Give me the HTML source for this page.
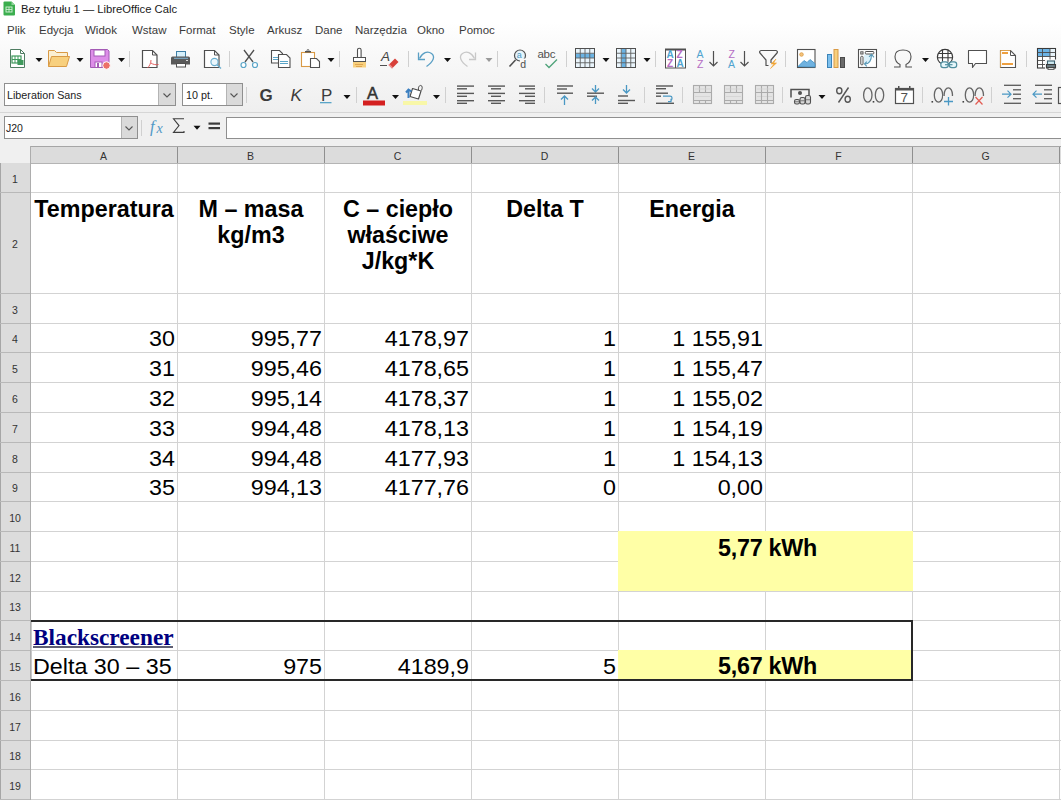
<!DOCTYPE html>
<html><head><meta charset="utf-8"><style>
html,body{margin:0;padding:0;}
body{width:1061px;height:800px;overflow:hidden;position:relative;background:#fff;font-family:"Liberation Sans",sans-serif;}
</style></head><body>
<div style="position:absolute;left:0px;top:0px;width:1061px;height:22px;background:#ffffff;"></div>
<div style="position:absolute;left:0;top:22px;width:1061px;height:90px;background:linear-gradient(#ffffff,#f8f8f8 40%,#efefef)"></div>
<div style="position:absolute;left:0px;top:112px;width:1061px;height:1px;background:#d6d6d6;"></div>
<div style="position:absolute;left:0px;top:113px;width:1061px;height:33px;background:#f0f0f0;"></div>
<div style="position:absolute;left:0px;top:146px;width:1061px;height:17px;background:#f0f0f0;"></div>
<div style="position:absolute;left:30px;top:146px;width:1031px;height:17px;background:#dcdcdc;"></div>
<div style="position:absolute;left:30px;top:146px;width:1031px;height:1px;background:#a6a6a6;"></div>
<div style="position:absolute;left:30px;top:163px;width:1031px;height:1px;background:#b4b4b4;"></div>
<div style="position:absolute;left:0px;top:163px;width:30px;height:637px;background:#dcdcdc;"></div>
<div style="position:absolute;left:0px;top:163px;width:1px;height:637px;background:#a6a6a6;"></div>
<div style="position:absolute;left:30px;top:146px;width:1px;height:654px;background:#adadad;"></div>
<div style="position:absolute;left:31px;top:164px;width:1030px;height:636px;background:#ffffff;"></div>
<div style="position:absolute;left:31px;top:192px;width:1030px;height:1px;background:#d3d3d3;"></div>
<div style="position:absolute;left:0px;top:192px;width:30px;height:1px;background:#b8b8b8;"></div>
<div style="position:absolute;left:31px;top:293px;width:1030px;height:1px;background:#d3d3d3;"></div>
<div style="position:absolute;left:0px;top:293px;width:30px;height:1px;background:#b8b8b8;"></div>
<div style="position:absolute;left:31px;top:323px;width:1030px;height:1px;background:#d3d3d3;"></div>
<div style="position:absolute;left:0px;top:323px;width:30px;height:1px;background:#b8b8b8;"></div>
<div style="position:absolute;left:31px;top:352px;width:1030px;height:1px;background:#d3d3d3;"></div>
<div style="position:absolute;left:0px;top:352px;width:30px;height:1px;background:#b8b8b8;"></div>
<div style="position:absolute;left:31px;top:382px;width:1030px;height:1px;background:#d3d3d3;"></div>
<div style="position:absolute;left:0px;top:382px;width:30px;height:1px;background:#b8b8b8;"></div>
<div style="position:absolute;left:31px;top:412px;width:1030px;height:1px;background:#d3d3d3;"></div>
<div style="position:absolute;left:0px;top:412px;width:30px;height:1px;background:#b8b8b8;"></div>
<div style="position:absolute;left:31px;top:442px;width:1030px;height:1px;background:#d3d3d3;"></div>
<div style="position:absolute;left:0px;top:442px;width:30px;height:1px;background:#b8b8b8;"></div>
<div style="position:absolute;left:31px;top:472px;width:1030px;height:1px;background:#d3d3d3;"></div>
<div style="position:absolute;left:0px;top:472px;width:30px;height:1px;background:#b8b8b8;"></div>
<div style="position:absolute;left:31px;top:501px;width:1030px;height:1px;background:#d3d3d3;"></div>
<div style="position:absolute;left:0px;top:501px;width:30px;height:1px;background:#b8b8b8;"></div>
<div style="position:absolute;left:31px;top:531px;width:1030px;height:1px;background:#d3d3d3;"></div>
<div style="position:absolute;left:0px;top:531px;width:30px;height:1px;background:#b8b8b8;"></div>
<div style="position:absolute;left:31px;top:561px;width:1030px;height:1px;background:#d3d3d3;"></div>
<div style="position:absolute;left:0px;top:561px;width:30px;height:1px;background:#b8b8b8;"></div>
<div style="position:absolute;left:31px;top:591px;width:1030px;height:1px;background:#d3d3d3;"></div>
<div style="position:absolute;left:0px;top:591px;width:30px;height:1px;background:#b8b8b8;"></div>
<div style="position:absolute;left:31px;top:620px;width:1030px;height:1px;background:#d3d3d3;"></div>
<div style="position:absolute;left:0px;top:620px;width:30px;height:1px;background:#b8b8b8;"></div>
<div style="position:absolute;left:31px;top:650px;width:1030px;height:1px;background:#d3d3d3;"></div>
<div style="position:absolute;left:0px;top:650px;width:30px;height:1px;background:#b8b8b8;"></div>
<div style="position:absolute;left:31px;top:680px;width:1030px;height:1px;background:#d3d3d3;"></div>
<div style="position:absolute;left:0px;top:680px;width:30px;height:1px;background:#b8b8b8;"></div>
<div style="position:absolute;left:31px;top:710px;width:1030px;height:1px;background:#d3d3d3;"></div>
<div style="position:absolute;left:0px;top:710px;width:30px;height:1px;background:#b8b8b8;"></div>
<div style="position:absolute;left:31px;top:740px;width:1030px;height:1px;background:#d3d3d3;"></div>
<div style="position:absolute;left:0px;top:740px;width:30px;height:1px;background:#b8b8b8;"></div>
<div style="position:absolute;left:31px;top:769px;width:1030px;height:1px;background:#d3d3d3;"></div>
<div style="position:absolute;left:0px;top:769px;width:30px;height:1px;background:#b8b8b8;"></div>
<div style="position:absolute;left:31px;top:799px;width:1030px;height:1px;background:#d3d3d3;"></div>
<div style="position:absolute;left:0px;top:799px;width:30px;height:1px;background:#b8b8b8;"></div>
<div style="position:absolute;left:177px;top:164px;width:1px;height:636px;background:#d3d3d3;"></div>
<div style="position:absolute;left:177px;top:147px;width:1px;height:16px;background:#8f8f8f;"></div>
<div style="position:absolute;left:324px;top:164px;width:1px;height:636px;background:#d3d3d3;"></div>
<div style="position:absolute;left:324px;top:147px;width:1px;height:16px;background:#8f8f8f;"></div>
<div style="position:absolute;left:471px;top:164px;width:1px;height:636px;background:#d3d3d3;"></div>
<div style="position:absolute;left:471px;top:147px;width:1px;height:16px;background:#8f8f8f;"></div>
<div style="position:absolute;left:618px;top:164px;width:1px;height:636px;background:#d3d3d3;"></div>
<div style="position:absolute;left:618px;top:147px;width:1px;height:16px;background:#8f8f8f;"></div>
<div style="position:absolute;left:765px;top:164px;width:1px;height:636px;background:#d3d3d3;"></div>
<div style="position:absolute;left:765px;top:147px;width:1px;height:16px;background:#8f8f8f;"></div>
<div style="position:absolute;left:912px;top:164px;width:1px;height:636px;background:#d3d3d3;"></div>
<div style="position:absolute;left:912px;top:147px;width:1px;height:16px;background:#8f8f8f;"></div>
<div style="position:absolute;left:1059px;top:164px;width:1px;height:636px;background:#d3d3d3;"></div>
<div style="position:absolute;left:1059px;top:147px;width:1px;height:16px;background:#8f8f8f;"></div>
<div style="position:absolute;left:30px;top:148px;width:147px;height:16px;font-family:'Liberation Sans',sans-serif;font-size:10.5px;line-height:16px;text-align:center;color:#333">A</div>
<div style="position:absolute;left:177px;top:148px;width:147px;height:16px;font-family:'Liberation Sans',sans-serif;font-size:10.5px;line-height:16px;text-align:center;color:#333">B</div>
<div style="position:absolute;left:324px;top:148px;width:147px;height:16px;font-family:'Liberation Sans',sans-serif;font-size:10.5px;line-height:16px;text-align:center;color:#333">C</div>
<div style="position:absolute;left:471px;top:148px;width:147px;height:16px;font-family:'Liberation Sans',sans-serif;font-size:10.5px;line-height:16px;text-align:center;color:#333">D</div>
<div style="position:absolute;left:618px;top:148px;width:147px;height:16px;font-family:'Liberation Sans',sans-serif;font-size:10.5px;line-height:16px;text-align:center;color:#333">E</div>
<div style="position:absolute;left:765px;top:148px;width:147px;height:16px;font-family:'Liberation Sans',sans-serif;font-size:10.5px;line-height:16px;text-align:center;color:#333">F</div>
<div style="position:absolute;left:912px;top:148px;width:147px;height:16px;font-family:'Liberation Sans',sans-serif;font-size:10.5px;line-height:16px;text-align:center;color:#333">G</div>
<div style="position:absolute;left:0px;top:165px;width:30px;height:29px;font-family:'Liberation Sans',sans-serif;font-size:10.5px;line-height:29px;text-align:center;color:#333">1</div>
<div style="position:absolute;left:0px;top:194px;width:30px;height:101px;font-family:'Liberation Sans',sans-serif;font-size:10.5px;line-height:101px;text-align:center;color:#333">2</div>
<div style="position:absolute;left:0px;top:295px;width:30px;height:30px;font-family:'Liberation Sans',sans-serif;font-size:10.5px;line-height:30px;text-align:center;color:#333">3</div>
<div style="position:absolute;left:0px;top:325px;width:30px;height:29px;font-family:'Liberation Sans',sans-serif;font-size:10.5px;line-height:29px;text-align:center;color:#333">4</div>
<div style="position:absolute;left:0px;top:354px;width:30px;height:30px;font-family:'Liberation Sans',sans-serif;font-size:10.5px;line-height:30px;text-align:center;color:#333">5</div>
<div style="position:absolute;left:0px;top:384px;width:30px;height:30px;font-family:'Liberation Sans',sans-serif;font-size:10.5px;line-height:30px;text-align:center;color:#333">6</div>
<div style="position:absolute;left:0px;top:414px;width:30px;height:30px;font-family:'Liberation Sans',sans-serif;font-size:10.5px;line-height:30px;text-align:center;color:#333">7</div>
<div style="position:absolute;left:0px;top:444px;width:30px;height:30px;font-family:'Liberation Sans',sans-serif;font-size:10.5px;line-height:30px;text-align:center;color:#333">8</div>
<div style="position:absolute;left:0px;top:474px;width:30px;height:29px;font-family:'Liberation Sans',sans-serif;font-size:10.5px;line-height:29px;text-align:center;color:#333">9</div>
<div style="position:absolute;left:0px;top:503px;width:30px;height:30px;font-family:'Liberation Sans',sans-serif;font-size:10.5px;line-height:30px;text-align:center;color:#333">10</div>
<div style="position:absolute;left:0px;top:533px;width:30px;height:30px;font-family:'Liberation Sans',sans-serif;font-size:10.5px;line-height:30px;text-align:center;color:#333">11</div>
<div style="position:absolute;left:0px;top:563px;width:30px;height:30px;font-family:'Liberation Sans',sans-serif;font-size:10.5px;line-height:30px;text-align:center;color:#333">12</div>
<div style="position:absolute;left:0px;top:593px;width:30px;height:29px;font-family:'Liberation Sans',sans-serif;font-size:10.5px;line-height:29px;text-align:center;color:#333">13</div>
<div style="position:absolute;left:0px;top:622px;width:30px;height:30px;font-family:'Liberation Sans',sans-serif;font-size:10.5px;line-height:30px;text-align:center;color:#333">14</div>
<div style="position:absolute;left:0px;top:652px;width:30px;height:30px;font-family:'Liberation Sans',sans-serif;font-size:10.5px;line-height:30px;text-align:center;color:#333">15</div>
<div style="position:absolute;left:0px;top:682px;width:30px;height:30px;font-family:'Liberation Sans',sans-serif;font-size:10.5px;line-height:30px;text-align:center;color:#333">16</div>
<div style="position:absolute;left:0px;top:712px;width:30px;height:30px;font-family:'Liberation Sans',sans-serif;font-size:10.5px;line-height:30px;text-align:center;color:#333">17</div>
<div style="position:absolute;left:0px;top:742px;width:30px;height:29px;font-family:'Liberation Sans',sans-serif;font-size:10.5px;line-height:29px;text-align:center;color:#333">18</div>
<div style="position:absolute;left:0px;top:771px;width:30px;height:30px;font-family:'Liberation Sans',sans-serif;font-size:10.5px;line-height:30px;text-align:center;color:#333">19</div>
<div style="position:absolute;left:618px;top:531px;width:295px;height:60px;background:#ffffa6;"></div>
<div style="position:absolute;left:618px;top:650px;width:293px;height:29px;background:#ffffa6;"></div>
<div style="position:absolute;left:31px;top:196px;width:146px;box-sizing:border-box;font-family:'Liberation Sans', sans-serif;font-size:23.3px;line-height:26.2px;text-align:center;color:#000;font-weight:bold;white-space:pre;">Temperatura</div>
<div style="position:absolute;left:178px;top:196px;width:146px;box-sizing:border-box;font-family:'Liberation Sans', sans-serif;font-size:23.3px;line-height:26.2px;text-align:center;color:#000;font-weight:bold;white-space:pre;">M – masa
kg/m3</div>
<div style="position:absolute;left:325px;top:196px;width:146px;box-sizing:border-box;font-family:'Liberation Sans', sans-serif;font-size:23.3px;line-height:26.2px;text-align:center;color:#000;font-weight:bold;white-space:pre;">C – ciepło
właściwe
J/kg*K</div>
<div style="position:absolute;left:472px;top:196px;width:146px;box-sizing:border-box;font-family:'Liberation Sans', sans-serif;font-size:23.3px;line-height:26.2px;text-align:center;color:#000;font-weight:bold;white-space:pre;">Delta T</div>
<div style="position:absolute;left:619px;top:196px;width:146px;box-sizing:border-box;font-family:'Liberation Sans', sans-serif;font-size:23.3px;line-height:26.2px;text-align:center;color:#000;font-weight:bold;white-space:pre;">Energia</div>
<div style="position:absolute;left:31px;top:325.9px;width:146px;box-sizing:border-box;padding-right:2px;font-family:'Liberation Sans', sans-serif;font-size:23.3px;line-height:26.2px;text-align:right;color:#000;font-weight:normal;white-space:pre;transform:scaleY(0.955);transform-origin:0 0;">30</div>
<div style="position:absolute;left:178px;top:325.9px;width:146px;box-sizing:border-box;padding-right:2px;font-family:'Liberation Sans', sans-serif;font-size:23.3px;line-height:26.2px;text-align:right;color:#000;font-weight:normal;white-space:pre;transform:scaleY(0.955);transform-origin:0 0;">995,77</div>
<div style="position:absolute;left:325px;top:325.9px;width:146px;box-sizing:border-box;padding-right:2px;font-family:'Liberation Sans', sans-serif;font-size:23.3px;line-height:26.2px;text-align:right;color:#000;font-weight:normal;white-space:pre;transform:scaleY(0.955);transform-origin:0 0;">4178,97</div>
<div style="position:absolute;left:472px;top:325.9px;width:146px;box-sizing:border-box;padding-right:2px;font-family:'Liberation Sans', sans-serif;font-size:23.3px;line-height:26.2px;text-align:right;color:#000;font-weight:normal;white-space:pre;transform:scaleY(0.955);transform-origin:0 0;">1</div>
<div style="position:absolute;left:619px;top:325.9px;width:146px;box-sizing:border-box;padding-right:2px;font-family:'Liberation Sans', sans-serif;font-size:23.3px;line-height:26.2px;text-align:right;color:#000;font-weight:normal;white-space:pre;transform:scaleY(0.955);transform-origin:0 0;">1 155,91</div>
<div style="position:absolute;left:31px;top:355.9px;width:146px;box-sizing:border-box;padding-right:2px;font-family:'Liberation Sans', sans-serif;font-size:23.3px;line-height:26.2px;text-align:right;color:#000;font-weight:normal;white-space:pre;transform:scaleY(0.955);transform-origin:0 0;">31</div>
<div style="position:absolute;left:178px;top:355.9px;width:146px;box-sizing:border-box;padding-right:2px;font-family:'Liberation Sans', sans-serif;font-size:23.3px;line-height:26.2px;text-align:right;color:#000;font-weight:normal;white-space:pre;transform:scaleY(0.955);transform-origin:0 0;">995,46</div>
<div style="position:absolute;left:325px;top:355.9px;width:146px;box-sizing:border-box;padding-right:2px;font-family:'Liberation Sans', sans-serif;font-size:23.3px;line-height:26.2px;text-align:right;color:#000;font-weight:normal;white-space:pre;transform:scaleY(0.955);transform-origin:0 0;">4178,65</div>
<div style="position:absolute;left:472px;top:355.9px;width:146px;box-sizing:border-box;padding-right:2px;font-family:'Liberation Sans', sans-serif;font-size:23.3px;line-height:26.2px;text-align:right;color:#000;font-weight:normal;white-space:pre;transform:scaleY(0.955);transform-origin:0 0;">1</div>
<div style="position:absolute;left:619px;top:355.9px;width:146px;box-sizing:border-box;padding-right:2px;font-family:'Liberation Sans', sans-serif;font-size:23.3px;line-height:26.2px;text-align:right;color:#000;font-weight:normal;white-space:pre;transform:scaleY(0.955);transform-origin:0 0;">1 155,47</div>
<div style="position:absolute;left:31px;top:385.9px;width:146px;box-sizing:border-box;padding-right:2px;font-family:'Liberation Sans', sans-serif;font-size:23.3px;line-height:26.2px;text-align:right;color:#000;font-weight:normal;white-space:pre;transform:scaleY(0.955);transform-origin:0 0;">32</div>
<div style="position:absolute;left:178px;top:385.9px;width:146px;box-sizing:border-box;padding-right:2px;font-family:'Liberation Sans', sans-serif;font-size:23.3px;line-height:26.2px;text-align:right;color:#000;font-weight:normal;white-space:pre;transform:scaleY(0.955);transform-origin:0 0;">995,14</div>
<div style="position:absolute;left:325px;top:385.9px;width:146px;box-sizing:border-box;padding-right:2px;font-family:'Liberation Sans', sans-serif;font-size:23.3px;line-height:26.2px;text-align:right;color:#000;font-weight:normal;white-space:pre;transform:scaleY(0.955);transform-origin:0 0;">4178,37</div>
<div style="position:absolute;left:472px;top:385.9px;width:146px;box-sizing:border-box;padding-right:2px;font-family:'Liberation Sans', sans-serif;font-size:23.3px;line-height:26.2px;text-align:right;color:#000;font-weight:normal;white-space:pre;transform:scaleY(0.955);transform-origin:0 0;">1</div>
<div style="position:absolute;left:619px;top:385.9px;width:146px;box-sizing:border-box;padding-right:2px;font-family:'Liberation Sans', sans-serif;font-size:23.3px;line-height:26.2px;text-align:right;color:#000;font-weight:normal;white-space:pre;transform:scaleY(0.955);transform-origin:0 0;">1 155,02</div>
<div style="position:absolute;left:31px;top:415.9px;width:146px;box-sizing:border-box;padding-right:2px;font-family:'Liberation Sans', sans-serif;font-size:23.3px;line-height:26.2px;text-align:right;color:#000;font-weight:normal;white-space:pre;transform:scaleY(0.955);transform-origin:0 0;">33</div>
<div style="position:absolute;left:178px;top:415.9px;width:146px;box-sizing:border-box;padding-right:2px;font-family:'Liberation Sans', sans-serif;font-size:23.3px;line-height:26.2px;text-align:right;color:#000;font-weight:normal;white-space:pre;transform:scaleY(0.955);transform-origin:0 0;">994,48</div>
<div style="position:absolute;left:325px;top:415.9px;width:146px;box-sizing:border-box;padding-right:2px;font-family:'Liberation Sans', sans-serif;font-size:23.3px;line-height:26.2px;text-align:right;color:#000;font-weight:normal;white-space:pre;transform:scaleY(0.955);transform-origin:0 0;">4178,13</div>
<div style="position:absolute;left:472px;top:415.9px;width:146px;box-sizing:border-box;padding-right:2px;font-family:'Liberation Sans', sans-serif;font-size:23.3px;line-height:26.2px;text-align:right;color:#000;font-weight:normal;white-space:pre;transform:scaleY(0.955);transform-origin:0 0;">1</div>
<div style="position:absolute;left:619px;top:415.9px;width:146px;box-sizing:border-box;padding-right:2px;font-family:'Liberation Sans', sans-serif;font-size:23.3px;line-height:26.2px;text-align:right;color:#000;font-weight:normal;white-space:pre;transform:scaleY(0.955);transform-origin:0 0;">1 154,19</div>
<div style="position:absolute;left:31px;top:445.9px;width:146px;box-sizing:border-box;padding-right:2px;font-family:'Liberation Sans', sans-serif;font-size:23.3px;line-height:26.2px;text-align:right;color:#000;font-weight:normal;white-space:pre;transform:scaleY(0.955);transform-origin:0 0;">34</div>
<div style="position:absolute;left:178px;top:445.9px;width:146px;box-sizing:border-box;padding-right:2px;font-family:'Liberation Sans', sans-serif;font-size:23.3px;line-height:26.2px;text-align:right;color:#000;font-weight:normal;white-space:pre;transform:scaleY(0.955);transform-origin:0 0;">994,48</div>
<div style="position:absolute;left:325px;top:445.9px;width:146px;box-sizing:border-box;padding-right:2px;font-family:'Liberation Sans', sans-serif;font-size:23.3px;line-height:26.2px;text-align:right;color:#000;font-weight:normal;white-space:pre;transform:scaleY(0.955);transform-origin:0 0;">4177,93</div>
<div style="position:absolute;left:472px;top:445.9px;width:146px;box-sizing:border-box;padding-right:2px;font-family:'Liberation Sans', sans-serif;font-size:23.3px;line-height:26.2px;text-align:right;color:#000;font-weight:normal;white-space:pre;transform:scaleY(0.955);transform-origin:0 0;">1</div>
<div style="position:absolute;left:619px;top:445.9px;width:146px;box-sizing:border-box;padding-right:2px;font-family:'Liberation Sans', sans-serif;font-size:23.3px;line-height:26.2px;text-align:right;color:#000;font-weight:normal;white-space:pre;transform:scaleY(0.955);transform-origin:0 0;">1 154,13</div>
<div style="position:absolute;left:31px;top:474.9px;width:146px;box-sizing:border-box;padding-right:2px;font-family:'Liberation Sans', sans-serif;font-size:23.3px;line-height:26.2px;text-align:right;color:#000;font-weight:normal;white-space:pre;transform:scaleY(0.955);transform-origin:0 0;">35</div>
<div style="position:absolute;left:178px;top:474.9px;width:146px;box-sizing:border-box;padding-right:2px;font-family:'Liberation Sans', sans-serif;font-size:23.3px;line-height:26.2px;text-align:right;color:#000;font-weight:normal;white-space:pre;transform:scaleY(0.955);transform-origin:0 0;">994,13</div>
<div style="position:absolute;left:325px;top:474.9px;width:146px;box-sizing:border-box;padding-right:2px;font-family:'Liberation Sans', sans-serif;font-size:23.3px;line-height:26.2px;text-align:right;color:#000;font-weight:normal;white-space:pre;transform:scaleY(0.955);transform-origin:0 0;">4177,76</div>
<div style="position:absolute;left:472px;top:474.9px;width:146px;box-sizing:border-box;padding-right:2px;font-family:'Liberation Sans', sans-serif;font-size:23.3px;line-height:26.2px;text-align:right;color:#000;font-weight:normal;white-space:pre;transform:scaleY(0.955);transform-origin:0 0;">0</div>
<div style="position:absolute;left:619px;top:474.9px;width:146px;box-sizing:border-box;padding-right:2px;font-family:'Liberation Sans', sans-serif;font-size:23.3px;line-height:26.2px;text-align:right;color:#000;font-weight:normal;white-space:pre;transform:scaleY(0.955);transform-origin:0 0;">0,00</div>
<div style="position:absolute;left:619px;top:534.5px;width:293px;box-sizing:border-box;font-family:'Liberation Sans', sans-serif;font-size:23.3px;line-height:26.2px;text-align:center;color:#000;font-weight:bold;white-space:pre;letter-spacing:-0.25px;padding-left:4px;">5,77 kWh</div>
<div style="position:absolute;left:31px;top:623.5px;width:146px;box-sizing:border-box;padding-left:3px;font-family:'Liberation Serif', serif;font-size:23.3px;line-height:26.2px;text-align:left;color:#000080;font-weight:bold;white-space:pre;padding-left:2px;">Blackscreener</div>
<div style="position:absolute;left:33px;top:646px;width:140px;height:2px;background:#5e5e72;"></div>
<div style="position:absolute;left:31px;top:653.5px;width:146px;box-sizing:border-box;padding-left:3px;font-family:'Liberation Sans', sans-serif;font-size:23.3px;line-height:26.2px;text-align:left;color:#000;font-weight:normal;white-space:pre;transform:scaleY(0.955);transform-origin:0 0;padding-left:2px;">Delta 30 – 35</div>
<div style="position:absolute;left:178px;top:653.5px;width:146px;box-sizing:border-box;padding-right:2px;font-family:'Liberation Sans', sans-serif;font-size:23.3px;line-height:26.2px;text-align:right;color:#000;font-weight:normal;white-space:pre;transform:scaleY(0.955);transform-origin:0 0;">975</div>
<div style="position:absolute;left:325px;top:653.5px;width:146px;box-sizing:border-box;padding-right:2px;font-family:'Liberation Sans', sans-serif;font-size:23.3px;line-height:26.2px;text-align:right;color:#000;font-weight:normal;white-space:pre;transform:scaleY(0.955);transform-origin:0 0;">4189,9</div>
<div style="position:absolute;left:472px;top:653.5px;width:146px;box-sizing:border-box;padding-right:2px;font-family:'Liberation Sans', sans-serif;font-size:23.3px;line-height:26.2px;text-align:right;color:#000;font-weight:normal;white-space:pre;transform:scaleY(0.955);transform-origin:0 0;">5</div>
<div style="position:absolute;left:619px;top:653px;width:293px;box-sizing:border-box;font-family:'Liberation Sans', sans-serif;font-size:23.3px;line-height:26.2px;text-align:center;color:#000;font-weight:bold;white-space:pre;letter-spacing:-0.25px;padding-left:4px;">5,67 kWh</div>
<div style="position:absolute;left:31px;top:620px;width:882px;height:2px;background:#282828;"></div>
<div style="position:absolute;left:31px;top:679px;width:882px;height:2px;background:#282828;"></div>
<div style="position:absolute;left:911px;top:620px;width:2px;height:61px;background:#282828;"></div>
<div style="position:absolute;left:31px;top:622px;width:1px;height:57px;background:#c8c8c8;"></div>
<div style="position:absolute;left:21px;top:3.5px;font-family:'Liberation Sans', sans-serif;font-size:11.25px;color:#1a1a1a;font-weight:normal;white-space:pre;line-height:1;">Bez tytułu 1 — LibreOffice Calc</div>
<div style="position:absolute;left:7px;top:25px;font-family:'Liberation Sans', sans-serif;font-size:11.5px;color:#3a3a3a;font-weight:normal;white-space:pre;line-height:1;">Plik</div>
<div style="position:absolute;left:39px;top:25px;font-family:'Liberation Sans', sans-serif;font-size:11.5px;color:#3a3a3a;font-weight:normal;white-space:pre;line-height:1;">Edycja</div>
<div style="position:absolute;left:85px;top:25px;font-family:'Liberation Sans', sans-serif;font-size:11.5px;color:#3a3a3a;font-weight:normal;white-space:pre;line-height:1;">Widok</div>
<div style="position:absolute;left:132px;top:25px;font-family:'Liberation Sans', sans-serif;font-size:11.5px;color:#3a3a3a;font-weight:normal;white-space:pre;line-height:1;">Wstaw</div>
<div style="position:absolute;left:179px;top:25px;font-family:'Liberation Sans', sans-serif;font-size:11.5px;color:#3a3a3a;font-weight:normal;white-space:pre;line-height:1;">Format</div>
<div style="position:absolute;left:229px;top:25px;font-family:'Liberation Sans', sans-serif;font-size:11.5px;color:#3a3a3a;font-weight:normal;white-space:pre;line-height:1;">Style</div>
<div style="position:absolute;left:267px;top:25px;font-family:'Liberation Sans', sans-serif;font-size:11.5px;color:#3a3a3a;font-weight:normal;white-space:pre;line-height:1;">Arkusz</div>
<div style="position:absolute;left:315px;top:25px;font-family:'Liberation Sans', sans-serif;font-size:11.5px;color:#3a3a3a;font-weight:normal;white-space:pre;line-height:1;">Dane</div>
<div style="position:absolute;left:355px;top:25px;font-family:'Liberation Sans', sans-serif;font-size:11.5px;color:#3a3a3a;font-weight:normal;white-space:pre;line-height:1;">Narzędzia</div>
<div style="position:absolute;left:417px;top:25px;font-family:'Liberation Sans', sans-serif;font-size:11.5px;color:#3a3a3a;font-weight:normal;white-space:pre;line-height:1;">Okno</div>
<div style="position:absolute;left:459px;top:25px;font-family:'Liberation Sans', sans-serif;font-size:11.5px;color:#3a3a3a;font-weight:normal;white-space:pre;line-height:1;">Pomoc</div>
<div style="position:absolute;left:4px;top:116px;width:134px;height:23px;background:#ffffff;box-sizing:border-box;border:1px solid #8f8f8f;"></div>
<div style="position:absolute;left:121px;top:117px;width:16px;height:21px;background:#dadada;box-sizing:border-box;border-left:1px solid #b4b4b4;"></div>
<svg style="position:absolute;left:124.0px;top:123.5px" width="10" height="8"><path d="M1.5 2.5l3.5 3.5 3.5-3.5" fill="none" stroke="#555" stroke-width="1.1"/></svg>
<div style="position:absolute;left:6px;top:123px;font-family:'Liberation Sans', sans-serif;font-size:10.5px;color:#222;font-weight:normal;white-space:pre;line-height:1;">J20</div>
<div style="position:absolute;left:226px;top:117px;width:835px;height:22px;background:#ffffff;box-sizing:border-box;border:1px solid #8f8f8f;border-right:none;"></div>
<div style="position:absolute;left:4px;top:83px;width:172px;height:23px;background:#ffffff;box-sizing:border-box;border:1px solid #8f8f8f;"></div>
<div style="position:absolute;left:158px;top:84px;width:17px;height:21px;background:#dadada;box-sizing:border-box;border-left:1px solid #b4b4b4;"></div>
<svg style="position:absolute;left:161.5px;top:90.5px" width="10" height="8"><path d="M1.5 2.5l3.5 3.5 3.5-3.5" fill="none" stroke="#555" stroke-width="1.1"/></svg>
<div style="position:absolute;left:7px;top:90px;font-family:'Liberation Sans', sans-serif;font-size:10.75px;color:#222;font-weight:normal;white-space:pre;line-height:1;">Liberation Sans</div>
<div style="position:absolute;left:182px;top:83px;width:61px;height:23px;background:#ffffff;box-sizing:border-box;border:1px solid #8f8f8f;"></div>
<div style="position:absolute;left:226px;top:84px;width:16px;height:21px;background:#dadada;box-sizing:border-box;border-left:1px solid #b4b4b4;"></div>
<svg style="position:absolute;left:229.0px;top:90.5px" width="10" height="8"><path d="M1.5 2.5l3.5 3.5 3.5-3.5" fill="none" stroke="#555" stroke-width="1.1"/></svg>
<div style="position:absolute;left:186px;top:90px;font-family:'Liberation Sans', sans-serif;font-size:10.75px;color:#222;font-weight:normal;white-space:pre;line-height:1;">10 pt.</div>
<svg style="position:absolute;left:0;top:0" width="1061" height="146" viewBox="0 0 1061 146"><path d="M10.5 49.5h10l4 4v14h-14z" fill="#fff" stroke="#4f7d62" stroke-width="1"/><path d="M20.5 49.5v4h4" fill="none" stroke="#4f7d62"/><rect x="12" y="56" width="9" height="7" fill="none" stroke="#3f9a5c" stroke-width="1.2"/><path d="M12 59.5h9M15 56v7M18 56v7" stroke="#3f9a5c" stroke-width="1"/><rect x="17.5" y="60" width="6" height="5" fill="#3f9a5c"/><path d="M35.5 58.0h7l-3.5 4z" fill="#111"/><path d="M48.5 66.5v-16h6l2 2h11v4" fill="#fbefd2" stroke="#d99a45" stroke-width="1"/><path d="M48.5 66.5l3-10h18l-3 10z" fill="#f8d07e" stroke="#d99a45" stroke-width="1"/><path d="M76.5 58.0h7l-3.5 4z" fill="#111"/><path d="M90.5 49.5h17l1.5 1.5v16.5h-18.5z" fill="#dd8de8" stroke="#a35bb5" stroke-width="1"/><rect x="94" y="50" width="11" height="6" fill="#fff" stroke="#a35bb5" stroke-width="1"/><rect x="95" y="62" width="7" height="5.5" fill="#fff" stroke="#a35bb5" stroke-width="1"/><rect x="97" y="63" width="2" height="4" fill="#a35bb5"/><circle cx="106.5" cy="65.5" r="3.8" fill="#ec7068" stroke="#fff" stroke-width="1"/><path d="M118.0 58.0h7l-3.5 4z" fill="#111"/><rect x="129" y="51" width="1" height="16" fill="#d0d0d0"/><path d="M142.5 50.5h10l4.5 4.5v12.5h-14.5z" fill="#fff" stroke="#505050" stroke-width="1.2"/><path d="M152.5 50.5v4.5h4.5" fill="none" stroke="#505050"/><path d="M151 60c0 3-1.5 6-3.5 8M151 63c2 1.5 4.5 2 7.5 1.5" fill="none" stroke="#e05050" stroke-width="0.9"/><rect x="176.5" y="51.5" width="9" height="6" fill="#d6effa" stroke="#3f7fa6" stroke-width="1"/><path d="M172.5 56.5h16a1.5 1.5 0 0 1 1.5 1.5v6.5h-19v-6.5a1.5 1.5 0 0 1 1.5-1.5z" fill="#5a5a5a"/><rect x="174" y="57.8" width="14" height="1" fill="#7fb4d4"/><rect x="176.5" y="63.5" width="9" height="3.5" fill="#fff" stroke="#505050" stroke-width="1"/><rect x="186" y="60" width="2" height="1" fill="#ddd"/><path d="M204.5 50.5h10l4.5 4.5v12.5h-14.5z" fill="#fff" stroke="#505050" stroke-width="1.2"/><path d="M214.5 50.5v4.5h4.5" fill="none" stroke="#505050"/><circle cx="214.5" cy="62" r="3.6" fill="#eaf6fc" stroke="#6aaecf" stroke-width="1.1"/><path d="M217 64.8l4 3.7" stroke="#6aaecf" stroke-width="1.3"/><rect x="229" y="51" width="1" height="16" fill="#d0d0d0"/><path d="M244 50l9 12M254 50l-9 12" stroke="#505050" stroke-width="1.3"/><circle cx="243.5" cy="65" r="2.5" fill="#fff" stroke="#5aa5c8" stroke-width="1.2"/><circle cx="255" cy="65" r="2.5" fill="#fff" stroke="#5aa5c8" stroke-width="1.2"/><path d="M271.5 50.5h8l3 3v9.5h-11z" fill="#fff" stroke="#505050" stroke-width="1.1"/><path d="M273 57.5h6M273 59.5h6" stroke="#5aa5c8" stroke-width="1"/><path d="M278.5 54.5h8l3.5 3.5v9.5h-11.5z" fill="#fff" stroke="#505050" stroke-width="1.1"/><path d="M280 61.5h8M280 63.5h8" stroke="#5aa5c8" stroke-width="1"/><rect x="301.5" y="52.5" width="13" height="14" fill="#fff" stroke="#d99a45" stroke-width="1.1"/><path d="M305 52.5h6v-1.5h-6z" fill="#505050"/><circle cx="308" cy="50.5" r="1" fill="none" stroke="#505050" stroke-width="0.8"/><path d="M310.5 58.5h6l3 3v6h-9z" fill="#fff" stroke="#505050" stroke-width="1.1"/><path d="M327.5 58.0h7l-3.5 4z" fill="#111"/><rect x="339" y="51" width="1" height="16" fill="#d0d0d0"/><path d="M357.5 57v-7a1.8 1.8 0 0 1 3.6 0v7" fill="#fff" stroke="#505050" stroke-width="1.1"/><rect x="353.5" y="57.5" width="12" height="4" fill="#fff" stroke="#505050" stroke-width="1"/><path d="M353 62h13v5.5h-13z" fill="#f8d07e"/><path d="M355 64.5h8M356 66.5h6" stroke="#d99a45" stroke-width="0.8"/><text x="381" y="61" font-family="Liberation Sans" font-style="italic" font-size="13.5" fill="#444">A</text><path d="M380 65.5h7" stroke="#505050" stroke-width="1"/><path d="M388.5 65l6.5-6.5 3.5 3.5-6.5 6.5z" fill="#d8403a"/><path d="M388.5 65l3.5 3.5 1-1-3.5-3.5z" fill="#f09090"/><rect x="408" y="51" width="1" height="16" fill="#d0d0d0"/><path d="M419.5 58.5c3-6 8-8 12-5 4 3 2 8-5 13" fill="none" stroke="#5a9fc4" stroke-width="1.3"/><path d="M418.5 52.5v7h6.5" fill="none" stroke="#5a9fc4" stroke-width="1.3"/><path d="M444.0 58.0h7l-3.5 4z" fill="#111"/><path d="M474.5 58.5c-3-6-8-8-12-5-4 3-2 8 5 13" fill="none" stroke="#c8c8c8" stroke-width="1.3"/><path d="M475.5 52.5v7h-6.5" fill="none" stroke="#c8c8c8" stroke-width="1.3"/><path d="M485.5 58.0h7l-3.5 4z" fill="#9a9a9a"/><rect x="497" y="51" width="1" height="16" fill="#d0d0d0"/><circle cx="520" cy="55.5" r="5.5" fill="#e6f4fb" stroke="#505050" stroke-width="1.2"/><path d="M515.5 60l-6 6.5" stroke="#505050" stroke-width="1.6"/><text x="516.8" y="58.3" font-family="Liberation Sans" font-size="9" fill="#4a98c4">a</text><rect x="520" y="58.5" width="6" height="5" fill="#f8f8f8"/><text x="520.3" y="67.5" font-family="Liberation Sans" font-size="10.5" fill="#505050">d</text><text x="537.5" y="57.8" font-family="Liberation Sans" font-size="11.5" fill="#505050" letter-spacing="-0.3">abc</text><path d="M545.5 64l3.5 3.5 8-8" fill="none" stroke="#4ea37a" stroke-width="1.3"/><rect x="566" y="51" width="1" height="16" fill="#d0d0d0"/><rect x="575.5" y="48.5" width="19" height="19" fill="#eaf5fc" stroke="#505050" stroke-width="1"/><rect x="576" y="53.5" width="18" height="4.5" fill="#6bb3e3"/><path d="M580.25 49v18M576 53.25h18" stroke="#606060" stroke-width="0.9"/><path d="M585.0 49v18M576 58.0h18" stroke="#606060" stroke-width="0.9"/><path d="M589.75 49v18M576 62.75h18" stroke="#606060" stroke-width="0.9"/><path d="M602.5 58.0h7l-3.5 4z" fill="#111"/><rect x="616.5" y="48.5" width="19" height="19" fill="#eaf5fc" stroke="#505050" stroke-width="1"/><rect x="621.5" y="49" width="4.5" height="18" fill="#6bb3e3"/><path d="M621.25 49v18M617 53.25h18" stroke="#606060" stroke-width="0.9"/><path d="M626.0 49v18M617 58.0h18" stroke="#606060" stroke-width="0.9"/><path d="M630.75 49v18M617 62.75h18" stroke="#606060" stroke-width="0.9"/><path d="M643.5 58.0h7l-3.5 4z" fill="#111"/><rect x="655" y="51" width="1" height="16" fill="#d0d0d0"/><rect x="665.5" y="49.5" width="20" height="18.5" fill="#fff" stroke="#505050" stroke-width="1"/><rect x="665" y="48.5" width="21" height="2" fill="#505050"/><path d="M675.5 50v18" stroke="#505050"/><text x="666.6" y="58.3" font-family="Liberation Sans" font-size="10" font-weight="bold" fill="#4fa3cf">A</text><text x="667" y="67.3" font-family="Liberation Sans" font-size="10" font-weight="bold" fill="#b56cc4">Z</text><text x="676.6" y="58.3" font-family="Liberation Sans" font-size="10" font-weight="bold" fill="#b56cc4">Z</text><text x="676.4" y="67.3" font-family="Liberation Sans" font-size="10" font-weight="bold" fill="#4fa3cf">A</text><text x="696.5" y="58" font-family="Liberation Sans" font-size="10.5" font-weight="normal" fill="#4fa3cf">A</text><text x="697" y="67.5" font-family="Liberation Sans" font-size="10.5" font-weight="normal" fill="#b56cc4">Z</text><path d="M713.5 51v15M709.5 62l4 4 4-4" fill="none" stroke="#505050" stroke-width="1.2"/><text x="728.5" y="58" font-family="Liberation Sans" font-size="10.5" font-weight="normal" fill="#b56cc4">Z</text><text x="728" y="67.5" font-family="Liberation Sans" font-size="10.5" font-weight="normal" fill="#4fa3cf">A</text><path d="M744.5 51v15M740.5 62l4 4 4-4" fill="none" stroke="#505050" stroke-width="1.2"/><path d="M761 50.5h15a1.5 1.5 0 0 1 1 2.5l-6 7v3M761 50.5a1.5 1.5 0 0 0-1 2.5l6 7v5.5l2.5 0" fill="none" stroke="#505050" stroke-width="1.2" stroke-linejoin="round"/><path d="M776 59l-5 5h3l-3.5 4.5 6-5.5h-3l2.5-4z" fill="#f0a535" stroke="#f0a535" stroke-width="0.6"/><rect x="785" y="51" width="1" height="16" fill="#d0d0d0"/><rect x="797.5" y="49.5" width="17.5" height="18" fill="#fff" stroke="#505050" stroke-width="1.1"/><circle cx="801.5" cy="54.5" r="1.8" fill="#f4c27a" stroke="#d99a45" stroke-width="0.8"/><path d="M798 66.5l6-6 3 2 3-3 5 4v3.5z" fill="#6fb2e0" stroke="#3d8fc4" stroke-width="0.8"/><rect x="827.5" y="54.5" width="4" height="13" fill="#7cc0ee" stroke="#3b84b8" stroke-width="1"/><rect x="834" y="49.5" width="4" height="18" fill="#f8d07e" stroke="#d99a45" stroke-width="1"/><rect x="840.5" y="57.5" width="4" height="10" fill="#6a6a6a" stroke="#4a4a4a" stroke-width="1"/><rect x="858.5" y="49.5" width="18" height="18" fill="#fff" stroke="#505050" stroke-width="1.1"/><path d="M864 64c4.5 0 7.5-3 7.5-9.5H864z" fill="#dcf1fa"/><rect x="860.8" y="51.8" width="2.2" height="2.2" fill="#fff" stroke="#505050" stroke-width="1"/><rect x="865.3" y="51.5" width="8.5" height="2.5" rx="0.8" fill="#fff" stroke="#505050" stroke-width="1"/><rect x="860.8" y="56.3" width="2.2" height="8.5" rx="0.8" fill="#fff" stroke="#505050" stroke-width="1"/><path d="M864.5 64c4.5 0 7-3 7-9.5M869 56.8l2.5-2.5 2.5 3M866.8 61.7l-2.3 2.3 2.3 2.3" fill="none" stroke="#5a9ab8" stroke-width="1.1"/><rect x="885" y="51" width="1" height="16" fill="#d0d0d0"/><path d="M894 67h6v-2.5c-3-1.5-5-4.5-5-8 0-4 3-6.5 8-6.5s8 2.5 8 6.5c0 3.5-2 6.5-5 8V67h6" fill="none" stroke="#505050" stroke-width="1.1"/><path d="M922.0 58.0h7l-3.5 4z" fill="#111"/><circle cx="945" cy="57" r="7.6" fill="#fff" stroke="#3a3a3a" stroke-width="1.2"/><path d="M938 53.5h14M937.5 57.8h15M942.5 49.8v12M948 49.8v12" fill="none" stroke="#3a3a3a" stroke-width="1.1"/><rect x="940.8" y="61.8" width="7.5" height="5.8" rx="2.6" fill="#e6f7fb" stroke="#4f8e9e" stroke-width="1.2"/><rect x="949.2" y="61.8" width="7.5" height="5.8" rx="2.6" fill="#e6f7fb" stroke="#4f8e9e" stroke-width="1.2"/><path d="M945 64.7h7.5" stroke="#4f8e9e" stroke-width="1.2"/><path d="M968.5 50.5h18v13h-11l-3 4v-4h-4z" fill="#fff" stroke="#505050" stroke-width="1.1" stroke-linejoin="round"/><path d="M1000.5 50.5h10l5 5v12h-15z" fill="#fff" stroke="#555" stroke-width="1.1"/><path d="M1000.5 50.5h10M1000.5 50.5v17" fill="none" stroke="#d9a050" stroke-width="1.1"/><path d="M1010.5 50.5v5h5" fill="none" stroke="#555" stroke-width="1"/><rect x="1002" y="52" width="6" height="2" fill="#eea040"/><rect x="1002" y="63" width="11" height="2" fill="#eea040"/><rect x="1026" y="51" width="1" height="16" fill="#d0d0d0"/><rect x="1037.5" y="48.5" width="18" height="19.5" fill="#fff" stroke="#3a3a3a" stroke-width="1.1"/><rect x="1038" y="49" width="12" height="7.5" fill="#6cb4e6"/><rect x="1050.5" y="49" width="4.5" height="7.5" fill="#e8f4fb"/><path d="M1037.5 52.5h18M1037.5 56.5h18M1037.5 60.5h18M1037.5 64.5h18M1042.5 48.5v19.5M1050 48.5v19.5" stroke="#4a4a4a" stroke-width="0.9"/><rect x="1045" y="59.5" width="12" height="10" fill="#f6f6f6"/><rect x="1047.5" y="61" width="7" height="3.5" fill="#cfeaf2" stroke="#3a5f6e" stroke-width="1.1"/><path d="M1046.5 64.5h9v3.5h-9z" fill="#6a7a80" stroke="#3a3a3a" stroke-width="1.1"/><rect x="1048" y="67.5" width="6" height="1.8" fill="#fff" stroke="#3a3a3a" stroke-width="0.9"/><rect x="246" y="87" width="1" height="16" fill="#d0d0d0"/><text x="259.5" y="101" font-family="Liberation Sans" font-weight="bold" font-size="17" fill="#3c3c3c">G</text><text x="290.5" y="101" font-family="Liberation Sans" font-style="italic" font-size="17" fill="#3c3c3c">K</text><text x="321" y="101" font-family="Liberation Sans" font-size="17" fill="#3c3c3c">P</text><rect x="320" y="102" width="11.5" height="1.3" fill="#5aa5c8"/><path d="M343.5 95.0h7l-3.5 4z" fill="#111"/><rect x="356" y="87" width="1" height="16" fill="#d0d0d0"/><text x="367" y="99" font-family="Liberation Sans" font-size="16.5" fill="#333" stroke="#333" stroke-width="0.5">A</text><rect x="363" y="100.5" width="22" height="5" fill="#d42020"/><path d="M392.0 95.0h7l-3.5 4z" fill="#111"/><path d="M412.5 88.5l8.5 2.5-2.5 8-8.5-2.5z" fill="#fff" stroke="#4a4a4a" stroke-width="1.1" stroke-linejoin="round"/><path d="M418.5 90c-0.5-3 1-5 2.5-4.5s1.5 2.5 0.5 5" fill="none" stroke="#4a4a4a" stroke-width="1"/><path d="M408.5 98v-7.5M406 92.5l2.5-3 3 2" fill="none" stroke="#3b7fc0" stroke-width="2"/><rect x="403" y="101" width="24" height="4" fill="#f8f7a8"/><path d="M433.0 95.0h7l-3.5 4z" fill="#111"/><rect x="445" y="87" width="1" height="16" fill="#d0d0d0"/><rect x="457" y="85.39999999999999" width="17" height="1.4" fill="#585858"/><rect x="488" y="85.39999999999999" width="17" height="1.4" fill="#585858"/><rect x="519" y="85.39999999999999" width="16" height="1.4" fill="#585858"/><rect x="457" y="88.1" width="10" height="1.4" fill="#585858"/><rect x="491" y="88.1" width="10" height="1.4" fill="#585858"/><rect x="525" y="88.1" width="10" height="1.4" fill="#585858"/><rect x="457" y="92.7" width="17" height="1.4" fill="#585858"/><rect x="488" y="92.7" width="17" height="1.4" fill="#585858"/><rect x="519" y="92.7" width="16" height="1.4" fill="#585858"/><rect x="457" y="95.6" width="10" height="1.4" fill="#585858"/><rect x="491" y="95.6" width="10" height="1.4" fill="#585858"/><rect x="525" y="95.6" width="10" height="1.4" fill="#585858"/><rect x="457" y="100.0" width="17" height="1.4" fill="#585858"/><rect x="488" y="100.0" width="17" height="1.4" fill="#585858"/><rect x="519" y="100.0" width="16" height="1.4" fill="#585858"/><rect x="457" y="102.6" width="10" height="1.4" fill="#585858"/><rect x="491" y="102.6" width="10" height="1.4" fill="#585858"/><rect x="525" y="102.6" width="10" height="1.4" fill="#585858"/><rect x="544" y="87" width="1" height="16" fill="#d0d0d0"/><rect x="557" y="85.3" width="16" height="1.4" fill="#585858"/><rect x="557" y="88.3" width="10" height="1.4" fill="#585858"/><rect x="557" y="92.5" width="16" height="1.4" fill="#585858"/><path d="M564.5 105v-9M561 99.5l3.5-3.5 3.5 3.5" fill="none" stroke="#4a98c4" stroke-width="1.3"/><path d="M595.5 85v7M592 88.5l3.5 3.5 3.5-3.5" fill="none" stroke="#4a98c4" stroke-width="1.3"/><rect x="587" y="92.5" width="17" height="1.4" fill="#585858"/><rect x="587" y="95.5" width="10" height="1.4" fill="#585858"/><path d="M595.5 104v-7M592 100.5l3.5-3.5 3.5 3.5" fill="none" stroke="#4a98c4" stroke-width="1.3"/><path d="M626.5 85v8M623 89.5l3.5 3.5 3.5-3.5" fill="none" stroke="#4a98c4" stroke-width="1.3"/><rect x="618" y="95.3" width="10" height="1.4" fill="#585858"/><rect x="618" y="99.8" width="17" height="1.4" fill="#585858"/><rect x="618" y="102.6" width="10" height="1.4" fill="#585858"/><rect x="644" y="87" width="1" height="16" fill="#d0d0d0"/><rect x="656" y="85.3" width="17" height="1.4" fill="#585858"/><rect x="656" y="88.0" width="10" height="1.4" fill="#585858"/><rect x="656" y="92.5" width="12" height="1.4" fill="#585858"/><rect x="656" y="95.5" width="5" height="1.4" fill="#585858"/><rect x="656" y="102.6" width="18" height="1.4" fill="#585858"/><path d="M663 96.2h7c2.5 0 3 3 0 5.5M668 101.7h3l0-3" fill="none" stroke="#4a98c4" stroke-width="1.2"/><rect x="682" y="87" width="1" height="16" fill="#d0d0d0"/><rect x="693.5" y="85.5" width="18" height="18" fill="#e4e4e4" stroke="#ababab" stroke-width="1.1"/><path d="M694 92.5h17M694 100.5h17M699.5 86v6.5M705.5 86v6.5M699.5 100.5v3M705.5 100.5v3" stroke="#ababab" stroke-width="1.1"/><path d="M695 89h15M695 96.5h15" stroke="#d2d2d2" stroke-width="0.8"/><rect x="724.5" y="85.5" width="18" height="18" fill="#e4e4e4" stroke="#ababab" stroke-width="1.1"/><path d="M725 92.5h17M725 100.5h17M730.5 86v6.5M736.5 86v6.5M730.5 100.5v3M736.5 100.5v3" stroke="#ababab" stroke-width="1.1"/><path d="M726 89h15M726 96.5h15" stroke="#d2d2d2" stroke-width="0.8"/><rect x="755.5" y="85.5" width="18" height="18" fill="#e4e4e4" stroke="#ababab" stroke-width="1.1"/><path d="M756 92.5h17M756 100.5h17M761.5 86v6.5M767.5 86v6.5M761.5 100.5v3M767.5 100.5v3" stroke="#ababab" stroke-width="1.1"/><path d="M757 89h15M757 96.5h15" stroke="#d2d2d2" stroke-width="0.8"/><path d="M761.5 92.5v8M767.5 92.5v8" stroke="#ababab" stroke-width="1.1"/><rect x="782" y="87" width="1" height="16" fill="#d0d0d0"/><path d="M791 97.5v-8h18v6" fill="none" stroke="#505050" stroke-width="1.5"/><circle cx="800" cy="93" r="2" fill="#505050"/><rect x="794.5" y="99.5" width="5" height="4.5" rx="1.8" fill="#d8d8d8" stroke="#505050" stroke-width="1.1"/><path d="M795 101.75h4" stroke="#505050" stroke-width="0.7"/><rect x="800.0" y="97.5" width="5" height="6.5" rx="1.8" fill="#d8d8d8" stroke="#505050" stroke-width="1.1"/><path d="M800.5 100.75h4" stroke="#505050" stroke-width="0.7"/><rect x="805.5" y="95.5" width="5" height="8.5" rx="1.8" fill="#d8d8d8" stroke="#505050" stroke-width="1.1"/><path d="M806 99.75h4" stroke="#505050" stroke-width="0.7"/><path d="M818.5 95.0h7l-3.5 4z" fill="#111"/><path d="M848.5 87.5l-10 15" stroke="#555" stroke-width="1.4"/><ellipse cx="839.3" cy="90.8" rx="2.6" ry="3" fill="none" stroke="#555" stroke-width="1.4"/><ellipse cx="847.7" cy="99.3" rx="2.6" ry="3" fill="none" stroke="#555" stroke-width="1.4"/><ellipse cx="867.8" cy="95" rx="4.2" ry="7.2" fill="none" stroke="#666" stroke-width="1.3"/><rect x="872.7" y="101" width="1.6" height="1.6" fill="#444"/><ellipse cx="879.5" cy="95" rx="4.2" ry="7.2" fill="none" stroke="#666" stroke-width="1.3"/><rect x="895.5" y="88.5" width="18" height="15" fill="#fff" stroke="#505050" stroke-width="1.2"/><rect x="896" y="88" width="17" height="2.5" fill="#505050"/><rect x="898" y="86" width="1.5" height="3" fill="#505050"/><rect x="909" y="86" width="1.5" height="3" fill="#505050"/><text x="900.5" y="102" font-family="Liberation Sans" font-size="13.5" fill="#505050">7</text><rect x="922" y="87" width="1" height="16" fill="#d0d0d0"/><rect x="931.5" y="101" width="1.6" height="1.6" fill="#444"/><ellipse cx="938.5" cy="95" rx="4.2" ry="7.2" fill="none" stroke="#666" stroke-width="1.3"/><ellipse cx="948.3" cy="95" rx="4.2" ry="7.2" fill="none" stroke="#666" stroke-width="1.3"/><rect x="943" y="96" width="11" height="10" fill="#f1f1f1"/><path d="M948.5 97v8.5M944 101.5h9" stroke="#4a98c4" stroke-width="1.3"/><rect x="962.5" y="101" width="1.6" height="1.6" fill="#444"/><ellipse cx="969.5" cy="95" rx="4.2" ry="7.2" fill="none" stroke="#666" stroke-width="1.3"/><ellipse cx="979.3" cy="95" rx="4.2" ry="7.2" fill="none" stroke="#666" stroke-width="1.3"/><rect x="974" y="96" width="11" height="10" fill="#f1f1f1"/><path d="M975.5 97l7 7.5M982.5 97l-7 7.5" stroke="#e25b52" stroke-width="1.2"/><rect x="991" y="87" width="1" height="16" fill="#d0d0d0"/><rect x="1004" y="84.64999999999999" width="17" height="1.3" fill="#5a5a5a"/><rect x="1013" y="89.14999999999999" width="8" height="1.3" fill="#5a5a5a"/><rect x="1013" y="93.55" width="8" height="1.3" fill="#5a5a5a"/><rect x="1013" y="98.05" width="8" height="1.3" fill="#5a5a5a"/><rect x="1004" y="102.64999999999999" width="17" height="1.3" fill="#5a5a5a"/><path d="M1002 94.2h9M1007.5 90.7l3.5 3.5-3.5 3.5" fill="none" stroke="#4a98c4" stroke-width="1.2"/><rect x="1035" y="84.64999999999999" width="17" height="1.3" fill="#5a5a5a"/><rect x="1044" y="89.14999999999999" width="8" height="1.3" fill="#5a5a5a"/><rect x="1044" y="93.55" width="8" height="1.3" fill="#5a5a5a"/><rect x="1044" y="98.05" width="8" height="1.3" fill="#5a5a5a"/><rect x="1035" y="102.64999999999999" width="17" height="1.3" fill="#5a5a5a"/><path d="M1033 94.2h9M1036.5 90.7l-3.5 3.5 3.5 3.5" fill="none" stroke="#4a98c4" stroke-width="1.2"/><rect x="1058.5" y="87.5" width="4" height="16" fill="none" stroke="#505050" stroke-width="1.2"/><rect x="141" y="120" width="1" height="16" fill="#d0d0d0"/><text x="150" y="131.5" font-family="Liberation Serif" font-style="italic" font-size="16.5" fill="#4f98c6">f</text><text x="156.5" y="133" font-family="Liberation Serif" font-style="italic" font-size="14" fill="#4f98c6">x</text><path d="M184 118.8h-10.5l5.5 6.8-5.5 6.8h10.5v-1.5" fill="none" stroke="#3e3e3e" stroke-width="1.1"/><path d="M193.5 125.80000000000001h7l-3.5 4z" fill="#111"/><rect x="208.5" y="122.5" width="11.5" height="2.2" fill="#3a3a3a"/><rect x="208.5" y="127" width="11.5" height="2.2" fill="#3a3a3a"/></svg>
<svg style="position:absolute;left:0;top:0" width="20" height="20"><path d="M3.5 2.5a1 1 0 0 1 1-1h7l3.5 3.5v9.5a1 1 0 0 1-1 1h-9.5a1 1 0 0 1-1-1z" fill="#3bae4e"/><path d="M11.5 1.5v3.5h3.5" fill="#8fd39a"/><rect x="6" y="7" width="6" height="5" fill="none" stroke="#d7f0db" stroke-width="0.9"/><path d="M6 9.5h6M9 7v5" stroke="#d7f0db" stroke-width="0.8"/></svg>
</body></html>
